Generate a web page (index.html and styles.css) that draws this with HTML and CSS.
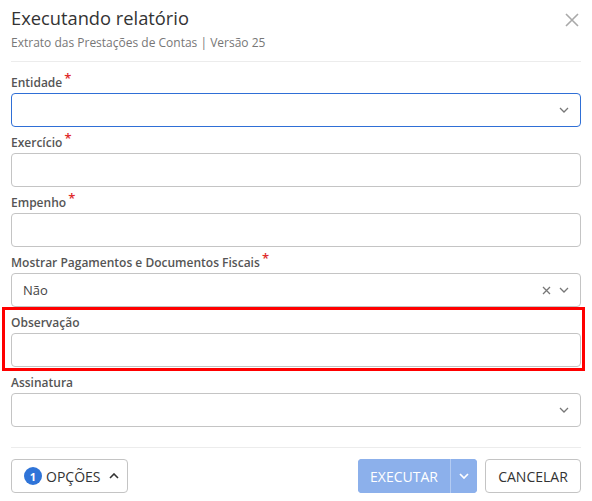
FILE: index.html
```html
<!DOCTYPE html>
<html lang="pt">
<head>
<meta charset="utf-8">
<link rel="stylesheet" href="styles.css">
</head>
<body>
<div class="modal">
  <header class="head">
    <div class="titles">
      <h1 class="title">Executando relatório</h1>
      <div class="subtitle">Extrato das Prestações de Contas | Versão 25</div>
    </div>
    <button class="close" aria-label="Fechar">
      <svg width="14" height="14" viewBox="0 0 14 14"><path d="M1 1L13 13M13 1L1 13" stroke="#a9a9a9" stroke-width="1.6" fill="none"/></svg>
    </button>
  </header>
  <form class="form">
    <div class="field">
      <label class="label">Entidade <span class="req">*</span></label>
      <div class="input focus select">
        <span class="value"></span>
        <svg class="chev" width="10" height="6" viewBox="0 0 10 6"><path d="M1 1L5 5L9 1" stroke="#777" stroke-width="1.3" fill="none"/></svg>
      </div>
    </div>
    <div class="field">
      <label class="label">Exercício <span class="req">*</span></label>
      <div class="input"></div>
    </div>
    <div class="field">
      <label class="label">Empenho <span class="req">*</span></label>
      <div class="input"></div>
    </div>
    <div class="field">
      <label class="label">Mostrar Pagamentos e Documentos Fiscais <span class="req">*</span></label>
      <div class="input select">
        <span class="value">Não</span>
        <svg class="clear" width="9" height="9" viewBox="0 0 9 9"><path d="M1 1L8 8M8 1L1 8" stroke="#777" stroke-width="1.3" fill="none"/></svg>
        <svg class="chev" width="10" height="6" viewBox="0 0 10 6"><path d="M1 1L5 5L9 1" stroke="#777" stroke-width="1.3" fill="none"/></svg>
      </div>
    </div>
    <div class="field highlight">
      <label class="label">Observação</label>
      <div class="input"></div>
    </div>
    <div class="field">
      <label class="label">Assinatura</label>
      <div class="input select">
        <span class="value"></span>
        <svg class="chev" width="10" height="6" viewBox="0 0 10 6"><path d="M1 1L5 5L9 1" stroke="#777" stroke-width="1.3" fill="none"/></svg>
      </div>
    </div>
  </form>
  <footer class="foot">
    <button class="btn opts" type="button">
      <span class="badge">1</span>
      <span>OPÇÕES</span>
      <svg width="10" height="6" viewBox="0 0 10 6"><path d="M1 5L5 1L9 5" stroke="#333" stroke-width="1.6" fill="none"/></svg>
    </button>
    <div class="actions">
      <div class="split">
        <button class="run" type="button">EXECUTAR</button>
        <button class="run-menu" type="button" aria-label="Mais">
          <svg width="10" height="6" viewBox="0 0 10 6"><path d="M1 1L5 5L9 1" stroke="#fff" stroke-width="1.7" fill="none"/></svg>
        </button>
      </div>
      <button class="btn cancel" type="button">CANCELAR</button>
    </div>
  </footer>
</div>
</body>
</html>
```

FILE: styles.css
```css
* { box-sizing: border-box; }
html, body { margin: 0; padding: 0; background: #fff; }
body {
  font-family: "Open Sans", "Noto Sans", sans-serif;
  color: #333;
  width: 592px;
  height: 501px;
  overflow: hidden;
}
.modal { padding: 0 11px; }
.head {
  display: flex;
  justify-content: space-between;
  align-items: flex-start;
  height: 62px;
  border-bottom: 1px solid #ececec;
  padding-top: 4px;
}
.title {
  margin: 0;
  font-size: 18.3px;
  font-weight: 400;
  line-height: 28px;
  color: #333;
}
.subtitle {
  font-size: 12px;
  line-height: 18px;
  color: #777;
  margin-top: 2px;
}
.close {
  border: 0;
  background: none;
  padding: 0;
  margin: 8px 1px 0 0;
  width: 16px;
  height: 16px;
  display: flex;
  align-items: center;
  justify-content: center;
}
.form { padding-top: 11px; display: flex; flex-direction: column; gap: 6px; }
.field { position: relative; }
.label {
  display: block;
  height: 20px;
  font-size: 12px;
  font-weight: 600;
  line-height: 20px;
  color: #555;
  overflow: visible;
}
.req { color: #e02b2b; font-size: 13px; line-height: 0; position: relative; top: -4px; margin-left: -1px; }
.input {
  height: 34px;
  border: 1px solid #c4c4c4;
  border-radius: 4px;
  background: #fff;
}
.input.focus { border-color: #2f6fd6; }
.select {
  display: flex;
  align-items: center;
  padding: 0 11px;
  gap: 8px;
}
.select .value { flex: 1; font-size: 13px; color: #444; }
.highlight::after {
  content: "";
  position: absolute;
  left: -9px;
  right: -4px;
  top: -6px;
  bottom: -4px;
  border: 3px solid #ff0000;
  pointer-events: none;
}
.foot {
  margin-top: 20px;
  border-top: 1px solid #ececec;
  padding-top: 11px;
  display: flex;
  justify-content: space-between;
  align-items: center;
}
.btn {
  height: 34px;
  border: 1px solid #c4c4c4;
  border-radius: 4px;
  background: #fff;
  font-family: inherit;
  font-size: 14px;
  color: #333;
  display: flex;
  align-items: center;
}
.opts { width: 117px; padding: 0 0 0 12px; gap: 4px; }
.opts svg { margin-left: 5px; }
.badge {
  width: 18px;
  height: 18px;
  border-radius: 50%;
  background: #2f74d8;
  color: #fff;
  font-size: 11px;
  font-weight: 700;
  display: flex;
  align-items: center;
  justify-content: center;
}
.actions { display: flex; gap: 8px; }
.split {
  display: flex;
  height: 34px;
  border-radius: 4px;
  overflow: hidden;
  background: #8cb0eb;
}
.run, .run-menu {
  border: 0;
  background: #8cb0eb;
  color: #fff;
  font-family: inherit;
  font-size: 14px;
  height: 34px;
}
.run { width: 93px; border-right: 1px solid #b3cbf2; }
.run-menu { width: 26px; display: flex; align-items: center; justify-content: center; padding: 0; }
.cancel { width: 96px; justify-content: center; padding: 0; }
```
